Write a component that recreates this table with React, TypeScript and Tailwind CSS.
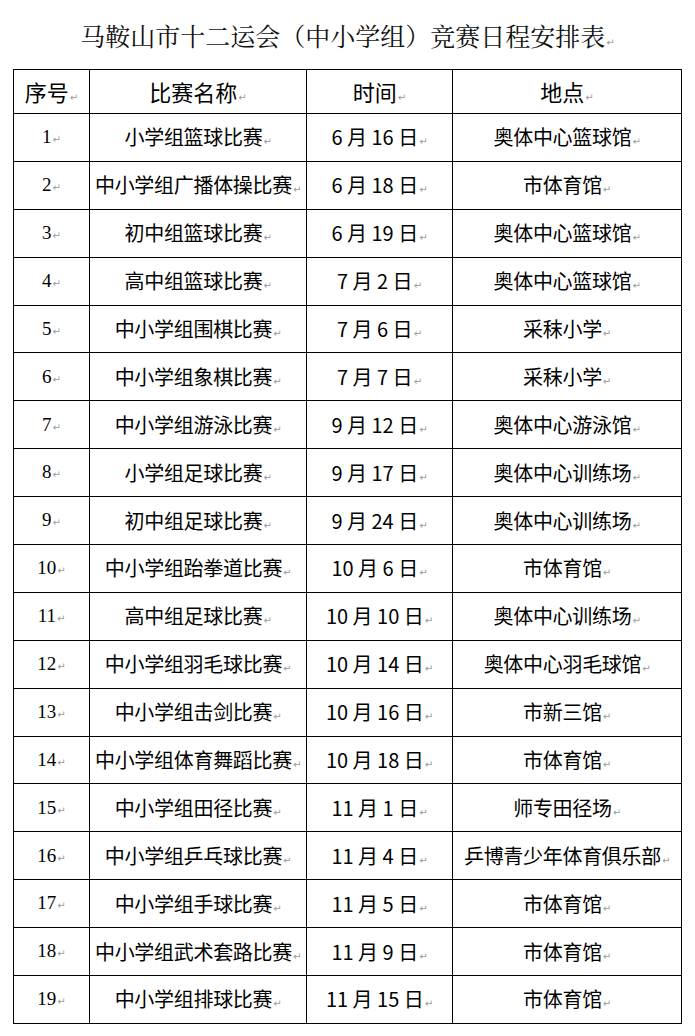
const rows: [string, string, string, string][] = [
  ['1', '小学组篮球比赛', '6 月 16 日', '奥体中心篮球馆'],
  ['2', '中小学组广播体操比赛', '6 月 18 日', '市体育馆'],
  ['3', '初中组篮球比赛', '6 月 19 日', '奥体中心篮球馆'],
  ['4', '高中组篮球比赛', '7 月 2 日', '奥体中心篮球馆'],
  ['5', '中小学组围棋比赛', '7 月 6 日', '采秣小学'],
  ['6', '中小学组象棋比赛', '7 月 7 日', '采秣小学'],
  ['7', '中小学组游泳比赛', '9 月 12 日', '奥体中心游泳馆'],
  ['8', '小学组足球比赛', '9 月 17 日', '奥体中心训练场'],
  ['9', '初中组足球比赛', '9 月 24 日', '奥体中心训练场'],
  ['10', '中小学组跆拳道比赛', '10 月 6 日', '市体育馆'],
  ['11', '高中组足球比赛', '10 月 10 日', '奥体中心训练场'],
  ['12', '中小学组羽毛球比赛', '10 月 14 日', '奥体中心羽毛球馆'],
  ['13', '中小学组击剑比赛', '10 月 16 日', '市新三馆'],
  ['14', '中小学组体育舞蹈比赛', '10 月 18 日', '市体育馆'],
  ['15', '中小学组田径比赛', '11 月 1 日', '师专田径场'],
  ['16', '中小学组乒乓球比赛', '11 月 4 日', '乒博青少年体育俱乐部'],
  ['17', '中小学组手球比赛', '11 月 5 日', '市体育馆'],
  ['18', '中小学组武术套路比赛', '11 月 9 日', '市体育馆'],
  ['19', '中小学组排球比赛', '11 月 15 日', '市体育馆'],
];

// Word 段落标记
const Mark = () => (
  <span className="ml-px align-baseline text-[10px] text-[#9a9a9a] [font-family:'DejaVu_Sans',sans-serif]">↵</span>
);

const cell = 'border border-black text-center align-middle p-0';

export default function App() {
  return (
    <div className="w-[695px] h-[1036px] bg-white text-black [font-family:'Noto_Sans_CJK_SC',sans-serif]">
      <h1 className="pt-[18px] h-[69px] text-center text-[25px] leading-[34px] font-normal text-[#111] [font-family:'Noto_Serif_CJK_SC','Noto_Sans_CJK_SC',serif]">
        马鞍山市十二运会（中小学组）竞赛日程安排表
        <Mark />
      </h1>
      <table className="ml-[13px] w-[668px] table-fixed border-collapse">
        <colgroup>
          <col className="w-[76px]" />
          <col className="w-[217px]" />
          <col className="w-[146px]" />
          <col className="w-[229px]" />
        </colgroup>
        <thead>
          <tr className="h-[44px] text-[22px]">
            <th className={`${cell} font-normal`}>序号<Mark /></th>
            <th className={`${cell} font-normal`}>比赛名称<Mark /></th>
            <th className={`${cell} font-normal`}>时间<Mark /></th>
            <th className={`${cell} font-normal`}>地点<Mark /></th>
          </tr>
        </thead>
        <tbody>
          {rows.map(([no, name, date, place]) => (
            <tr key={no} className="h-[47.9px] text-[20px]">
              <td className={`${cell} text-[19px] [font-family:'Liberation_Serif',serif]`}>
                {no}
                <Mark />
              </td>
              <td className={`${cell} whitespace-nowrap tracking-[-0.3px]`}>
                {name}
                <Mark />
              </td>
              <td className={cell}>
                {date}
                <Mark />
              </td>
              <td className={`${cell} whitespace-nowrap tracking-[-0.3px]`}>
                {place}
                <Mark />
              </td>
            </tr>
          ))}
        </tbody>
      </table>
    </div>
  );
}
